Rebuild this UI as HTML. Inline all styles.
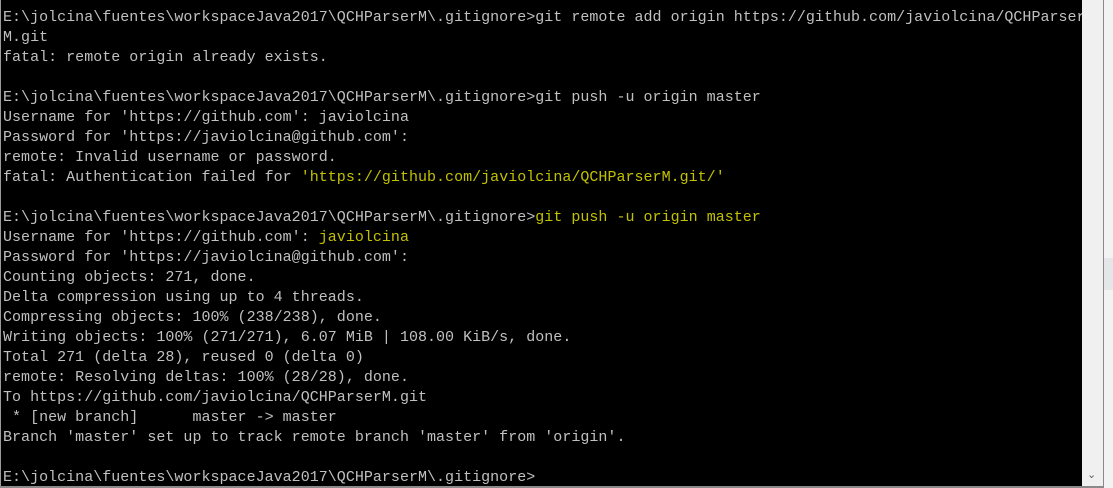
<!DOCTYPE html>
<html><head><meta charset="utf-8"><style>
html,body{margin:0;padding:0;width:1113px;height:488px;overflow:hidden;background:#f0f0f0;}
#term{position:absolute;left:0;top:0;width:1082px;height:486px;background:#000;border-left:1px solid #9a9a9a;box-sizing:border-box;}
pre{margin:0;position:absolute;left:2px;top:8px;font-family:"Liberation Mono",monospace;font-size:15px;letter-spacing:0.02px;line-height:20px;color:#c0c0c0;white-space:pre;}
.y{color:#c2c100;}
#sb{position:absolute;left:1082px;top:0;width:21px;height:486px;background:#f0f0f0;border-right:1px solid #8a8a8a;}
#right{position:absolute;left:1104px;top:0;width:9px;height:488px;background:#f3f3f3;}
#band{position:absolute;left:1104px;top:258px;width:9px;height:32px;background:#e4e6ea;}
#bot{position:absolute;left:0;top:486px;width:1104px;height:2px;background:#8a8a8a;}
#arr{position:absolute;left:1087px;top:468px;font:11px "DejaVu Sans",sans-serif;color:#606060;}
</style></head><body>
<div id="term"><pre>E:\jolcina\fuentes\workspaceJava2017\QCHParserM\.gitignore>git remote add origin https://github.com/javiolcina/QCHParser
M.git
fatal: remote origin already exists.

E:\jolcina\fuentes\workspaceJava2017\QCHParserM\.gitignore>git push -u origin master
Username for 'https://github.com': javiolcina
Password for 'https://javiolcina@github.com':
remote: Invalid username or password.
fatal: Authentication failed for <span class="y">'https://github.com/javiolcina/QCHParserM.git/'</span>

E:\jolcina\fuentes\workspaceJava2017\QCHParserM\.gitignore><span class="y">git push -u origin master</span>
Username for 'https://github.com': <span class="y">javiolcina</span>
Password for 'https://javiolcina@github.com':
Counting objects: 271, done.
Delta compression using up to 4 threads.
Compressing objects: 100% (238/238), done.
Writing objects: 100% (271/271), 6.07 MiB | 108.00 KiB/s, done.
Total 271 (delta 28), reused 0 (delta 0)
remote: Resolving deltas: 100% (28/28), done.
To https://github.com/javiolcina/QCHParserM.git
 * [new branch]      master -> master
Branch 'master' set up to track remote branch 'master' from 'origin'.

E:\jolcina\fuentes\workspaceJava2017\QCHParserM\.gitignore></pre></div>
<div id="sb"></div>
<div id="arr">⌄</div>
<div id="right"></div>
<div id="band"></div>
<div id="bot"></div>
</body></html>
